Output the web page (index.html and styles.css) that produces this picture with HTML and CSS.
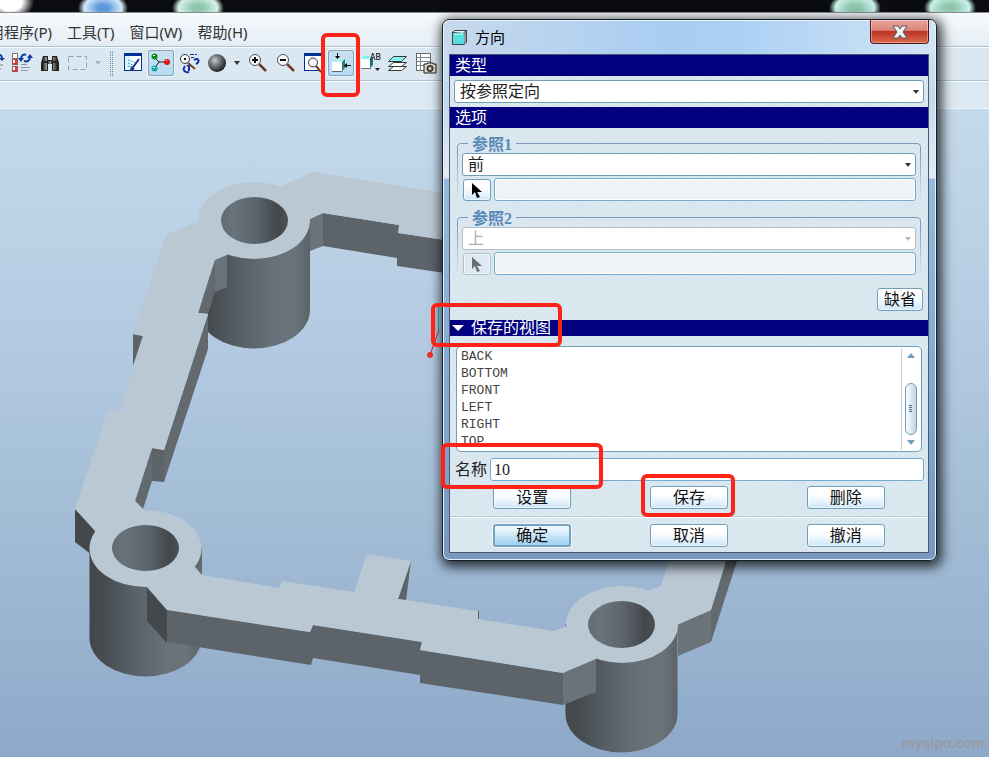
FILE: index.html
```html
<!DOCTYPE html>
<html lang="zh-CN">
<head>
<meta charset="utf-8">
<meta name="viewport" content="width=device-width, initial-scale=1">
<title>方向</title>
<link rel="stylesheet" href="styles.css">
</head>
<body>
<div class="app">
  <div class="window-top"></div>
  <nav class="menubar">
    <a href="#">用程序(P)</a>
    <a href="#">工具(T)</a>
    <a href="#">窗口(W)</a>
    <a href="#">帮助(H)</a>
  </nav>
  <div class="toolbar">
    <button class="tool" type="button" aria-label="更新">
      <svg viewBox="0 0 26 26"><path d="M17 6q5-3 5 3" fill="none" stroke="#0b3a9c" stroke-width="2"/><path d="M19 8h6l-3 3z" fill="#0b3a9c"/><path d="M18 15h5M18 19h3" stroke="#888"/></svg>
    </button>
    <button class="tool" type="button" aria-label="再生">
      <svg viewBox="0 0 26 26">
        <rect x="4.500" y="3.500" width="5" height="5" fill="#fff" stroke="#777"/><rect x="4.500" y="9.500" width="5" height="5" fill="#e33" stroke="#955"/><rect x="4.500" y="16.500" width="5" height="5" fill="#e33" stroke="#955"/>
        <path d="M5 10h2v3H5zM5 17h2v3H5z" fill="#fff"/>
        <path d="M13 9c0-4 3-5 5-4M22 7c0 4-3 5-6 4" fill="none" stroke="#0b3a9c" stroke-width="2"/><path d="M10 8h6l-3 4zM19 8h6l-3-4z" fill="#0b3a9c"/>
        <path d="M13 14.500h6M13 17.500h9M13 20.500h7" stroke="#8b959b"/>
      </svg>
    </button>
    <button class="tool" type="button" aria-label="查找">
      <svg viewBox="0 0 26 26">
        <defs><linearGradient id="bino"><stop offset="0" stop-color="#111"/><stop offset=".45" stop-color="#e8e5d8"/><stop offset="1" stop-color="#111"/></linearGradient></defs>
        <path d="M7 6h5v4h4V6h5l2 7v8h-7v-7h-4v7H5v-8z" fill="#222"/>
        <path d="M8 7h3v4H7zM17 7h3l1 4h-4zM6 13h5v7H6zM17 13h5v7h-5z" fill="url(#bino)"/><circle cx="14" cy="12.500" r="1.500" fill="#999"/>
      </svg>
    </button>
    <button class="tool" type="button" aria-label="框选">
      <svg viewBox="0 0 26 26"><rect x="4.500" y="6.500" width="18" height="13" fill="none" stroke="#98a0a5" stroke-dasharray="5 3"/></svg>
    </button>
    <button class="drop faded" type="button" aria-label="框选选项"></button>
    <span class="grip"></span>
    <button class="tool" type="button" aria-label="重画">
      <svg viewBox="0 0 26 26"><rect x="4.500" y="3.500" width="17" height="17" fill="#fff" stroke="#003296"/><path d="M4 3h18v3H4z" fill="#003296"/><path d="M5 6h6L9 20H5z" fill="#dff3fc"/><path d="M8 10l9 3M8 13l7 3M8 16l5 2" stroke="#20a8d8" stroke-dasharray="2 1"/><path d="M19 9l-8 11" stroke="#123a86" stroke-width="2"/><path d="M11 16l4 3-5 2z" fill="#123a86"/></svg>
    </button>
    <button class="tool active" type="button" aria-label="旋转中心">
      <svg viewBox="0 0 26 26"><path d="M6 7l5 5-5 7M11 12h8" fill="none" stroke="#222"/><circle cx="6.500" cy="6.500" r="3" fill="#0a8f18"/><circle cx="19" cy="12" r="3" fill="#d61616"/><circle cx="6.500" cy="18.500" r="3" fill="#14a8ac"/><path d="M5 5h2v1H5zM18 10h1v1h-1zM5 17h2v1H5z" fill="#fff"/></svg>
    </button>
    <button class="tool" type="button" aria-label="定向模式">
      <svg viewBox="0 0 26 26"><path d="M12 13l7 6" stroke="#6e3b24" stroke-width="2"/><circle cx="9" cy="9" r="4.500" fill="#f5f8fa" stroke="#333"/><path d="M8 8h2v2H8z" fill="#111"/><path d="M14 4.500h7M15 7.500h3" stroke="#1732a0" stroke-dasharray="4 1"/><path d="M18 10c5-3 6 2 2 4M9 16c-3 4 0 7 4 6M13 17v4" fill="none" stroke="#1732a0" stroke-width="2"/><path d="M10 15h4v4z" fill="#1732a0"/></svg>
    </button>
    <button class="tool" type="button" aria-label="着色">
      <svg viewBox="0 0 26 26"><defs><radialGradient id="ball" cx=".38" cy=".36" r=".65"><stop offset="0" stop-color="#c9cdd0"/><stop offset=".35" stop-color="#83898e"/><stop offset="1" stop-color="#1d2023"/></radialGradient></defs><circle cx="13" cy="13" r="9" fill="url(#ball)"/></svg>
    </button>
    <button class="drop shade-drop" type="button" aria-label="着色选项"></button>
    <button class="tool" type="button" aria-label="放大">
      <svg viewBox="0 0 26 26"><path d="M15 14l7 7" stroke="#6e3b24" stroke-width="2.500"/><circle cx="11" cy="10" r="5.500" fill="#f5f9fb" stroke="#4b5257"/><path d="M8 10h6M11 7v6" stroke="#111" stroke-width="2"/></svg>
    </button>
    <button class="tool" type="button" aria-label="缩小">
      <svg viewBox="0 0 26 26"><path d="M15 14l7 7" stroke="#6e3b24" stroke-width="2.500"/><circle cx="11" cy="10" r="5.500" fill="#f5f9fb" stroke="#4b5257"/><path d="M8 10h6" stroke="#111" stroke-width="2"/></svg>
    </button>
    <button class="tool" type="button" aria-label="重新调整">
      <svg viewBox="0 0 26 26"><rect x="4.500" y="3.500" width="17" height="17" fill="#fff" stroke="#003296"/><path d="M4 3h18v3H4z" fill="#003296"/><path d="M16 16l5 6" stroke="#6e3b24" stroke-width="2"/><circle cx="13" cy="12.500" r="4.500" fill="#f1f7fa" stroke="#333"/></svg>
    </button>
    <span class="marked">
      <button class="tool active" type="button" aria-label="重定向">
        <svg viewBox="0 0 26 26"><path d="M5 12l3-3h9l-3 3z" fill="#a9f1ef"/><path d="M14 12l3-3v9l-3 3z" fill="#138a86"/><path d="M4 12h10v9H4z" fill="#fff"/><path d="M4 21.500h10M14.500 12v9" stroke="#5b6468" fill="none"/><path d="M9.500 3v5M17 15.500h6" stroke="#000"/><path d="M7 6h5l-2.500 3zM19 13v5l-3-2.500z" fill="#000"/></svg>
      </button>
      <span class="mark mark-tool"></span>
    </span>
    <button class="tool" type="button" aria-label="已命名视图">
      <svg viewBox="0 0 26 26"><path d="M5 9l3-3h7l-3 3z" fill="#7ff0ee"/><path d="M14 9l3-2v8l-3 3z" fill="#147c7c"/><path d="M5 9h9v9H5z" fill="#fff"/><path d="M5 18.500h10" stroke="#6c777d"/><text x="14" y="10" class="icon-text">AB</text><path d="M19 18h5l-2.500 3z" fill="#222"/></svg>
    </button>
    <button class="tool" type="button" aria-label="层">
      <svg viewBox="0 0 26 26"><g stroke="#30383c" stroke-linejoin="round"><path d="M4.500 20.500l5-4h13l-5 4z" fill="#fff"/><path d="M4.500 16.500l5-4h13l-5 4z" fill="#fff"/><path d="M4.500 11.500l5-5h13l-5 5z" fill="#87f1ef"/></g></svg>
    </button>
    <button class="tool" type="button" aria-label="视图管理器">
      <svg viewBox="0 0 26 26"><rect x="4.500" y="3.500" width="14" height="17" fill="#fff" stroke="#646c70"/><path d="M5 7.500h13M5 11.500h13M5 15.500h13M8.500 4v16" stroke="#7c858a"/><path d="M12 14h3v-1h6v1h3v9H12z" fill="#ded9c0" stroke="#222"/><circle cx="18" cy="18.500" r="3" fill="#777" stroke="#111"/><circle cx="18" cy="18.500" r="1" fill="#fff"/></svg>
    </button>
  </div>
  <div class="message-bar"></div>
  <main class="canvas">
    <svg class="model" viewBox="0 109 989 648" width="989" height="648" aria-label="模型">
      <defs>
        <linearGradient id="body"><stop offset="0" stop-color="#42474a"/><stop offset=".12" stop-color="#454b4f"/><stop offset=".35" stop-color="#565e65"/><stop offset=".7" stop-color="#69727a"/><stop offset=".86" stop-color="#6b747b"/><stop offset="1" stop-color="#5b6368"/></linearGradient>
        <linearGradient id="hole"><stop offset="0" stop-color="#636c73"/><stop offset=".2" stop-color="#69737b"/><stop offset=".55" stop-color="#5b636a"/><stop offset=".85" stop-color="#42474a"/><stop offset="1" stop-color="#4b5053"/></linearGradient>
      </defs>
      <path d="M198 220V310A56 38.500 0 0 0 310 310V220z" fill="url(#body)"/>
      <path d="M89.500 548V638A56 38.500 0 0 0 201.500 638V548z" fill="url(#body)"/>
      <path d="M565.500 624V714A56 38.500 0 0 0 677.500 714V624z" fill="url(#body)"/>
      <path d="M180 300H208V349L180 420z" fill="#b6cde3"/>
      <g fill="#5c6469">
        <path d="M323 213L399 225V233L445 240V273L397 266V258L323 246z"/>
        <path d="M133 334L143 336L133 366z"/>
        <path d="M152 448L164 450V482L152 481z"/>
        <path d="M167 610L310 632L313 625L422 642L420 650L563 673V705L420 683V675L313 658L311 665L167 642z"/>
        <path d="M411 561L406 600L398 599zM477 611h2v9l-2-1z"/>
      </g>
      <g fill="#626a70">
        <path d="M208 314V349L164 482V450z"/>
        <path d="M215 260L198 313L208 314L215 292z"/>
        <path d="M152 448V481L143 509L135 501z"/>
        <path d="M195 566L202 548V575z"/>
        <path d="M711 610L726 560L737 561L711 642z"/>
      </g>
      <g fill="#6b737a">
        <path d="M310 218L323 213V246L310 251zM215 260L227 255V287L215 292zM563 673L596 659V692L563 705zM678 624L711 610V642L678 656z"/>
      </g>
      <path d="M75 509L96 530V558L75 542zM147 588L167 610V643L147 621z" fill="#42484b"/>
      <g fill="#bac8d3">
        <ellipse cx="254" cy="220.500" rx="56" ry="38.500"/>
        <ellipse cx="145.500" cy="548.500" rx="56" ry="38.500"/>
        <ellipse cx="622" cy="624.500" rx="56" ry="38.500"/>
        <path d="M281 186L313 172L445 193V240L398 233L399 225L323 213L308 220L270 240z"/>
        <path d="M200 220L166 235L133 334L143 336L119 411L108 410L75 509L95 531L100 550L150 530V515L143 509L135 501L152 448L164 450L208 314L198 313L215 260L227 255L250 240z"/>
        <path d="M185 560L195 567L202 575L279 588L282 581L354 592L367 554L411 561L398 599L478 611V619L554 631L572 624L600 645L596 659L563 673L420 650L422 642L313 625L310 632L167 610L147 587z"/>
        <path d="M645 592L661 586L674 545H731L711 610L677 625L640 640z"/>
      </g>
      <ellipse cx="254.500" cy="220.500" rx="33.500" ry="23.500" fill="url(#hole)"/>
      <ellipse cx="145.500" cy="548" rx="33.500" ry="23" fill="url(#hole)"/>
      <ellipse cx="621.500" cy="624.500" rx="33.500" ry="23.500" fill="url(#hole)"/>
      <path d="M438.500 303V330" stroke="#16bcc0"/>
      <path d="M439 330L430 355" stroke="#d22"/><circle cx="430" cy="355" r="3" fill="#f2302c"/>
    </svg>
    <span class="watermark">mysipo.com</span>
  </main>

  <section class="dialog" role="dialog" aria-labelledby="dialog-title">
    <header class="titlebar">
      <svg class="title-icon" viewBox="0 0 17 17"><path d="M1 3l3-2h12v12l-3 3H1z" fill="#39444a"/><path d="M2 3l2-1h10l-2 2z" fill="#eef3f3"/><path d="M13 4l2-2v11l-2 2z" fill="#8c9ba0"/><path d="M2 4h11v11H2z" fill="#58dedd"/><path d="M3 5h9v1H3z" fill="#a7f2f0"/></svg>
      <h1 id="dialog-title">方向</h1>
      <button class="close" type="button" aria-label="关闭"><svg viewBox="0 0 16 14"><path d="M1 1h5l2 3 2-3h5l-4 6 4 6h-5l-2-3-2 3H1l4-6z" fill="#f3f3f3" stroke="#565b68"/></svg></button>
    </header>
    <form class="content">
      <h2 class="band">类型</h2>
      <div class="pick type-pick"><select aria-label="类型"><option>按参照定向</option></select></div>
      <h2 class="band">选项</h2>
      <fieldset class="ref">
        <legend>参照1</legend>
        <div class="pick"><select aria-label="参照1"><option>前</option></select></div>
        <div class="ref-row">
          <button class="btn" type="button" aria-label="选取参照1"><svg viewBox="0 0 12 16"><path d="M1 0v12l3-3 2 6 3-1-3-5h5z" fill="#000"/></svg></button>
          <input type="text" readonly aria-label="参照1 值">
        </div>
      </fieldset>
      <fieldset class="ref">
        <legend>参照2</legend>
        <div class="pick"><select aria-label="参照2" disabled><option>上</option></select></div>
        <div class="ref-row">
          <button class="btn" type="button" disabled aria-label="选取参照2"><svg viewBox="0 0 12 16"><path d="M1 0v12l3-3 2 6 3-1-3-5h5z" fill="#666e72"/></svg></button>
          <input type="text" readonly aria-label="参照2 值">
        </div>
      </fieldset>
      <div class="default-row"><button class="btn" type="button">缺省</button></div>
      <h2 class="band saved"><span class="triangle"></span>保存的视图<span class="mark mark-saved"></span></h2>
      <div class="list">
        <select size="6" aria-label="保存的视图">
          <option>BACK</option><option>BOTTOM</option><option>FRONT</option><option>LEFT</option><option>RIGHT</option><option>TOP</option>
        </select>
        <div class="scroll"><span class="up"></span><span class="thumb"></span><span class="down"></span></div>
      </div>
      <div class="name-row">
        <label for="view-name">名称</label>
        <input id="view-name" type="text" value="10">
        <span class="mark mark-name"></span>
      </div>
      <div class="actions">
        <button class="btn" type="button">设置</button>
        <span class="marked"><button class="btn" type="button">保存</button><span class="mark mark-save"></span></span>
        <button class="btn" type="button">删除</button>
      </div>
      <div class="actions closing">
        <button class="btn primary" type="button">确定</button>
        <button class="btn" type="button">取消</button>
        <button class="btn" type="button">撤消</button>
      </div>
    </form>
  </section>
</div>
</body>
</html>
```
FILE: styles.css
```css
* { box-sizing: border-box; }

body {
  margin: 0;
  overflow: hidden;
  font-family: "Liberation Serif", "Noto Sans CJK SC", serif;
  font-size: 16px;
  color: #222;
}

button, input, select { font: inherit; color: inherit; margin: 0; padding: 0; }

.app {
  position: relative;
  display: flex;
  flex-direction: column;
  min-height: 100vh;
}

/* Main window */
.window-top {
  height: 13px;
  border-bottom: 1px solid #8e8b90;
  background:
    radial-gradient(ellipse 24px 18px at 10px 2px, #fff 50%, transparent),
    radial-gradient(ellipse 25px 16px at 103px 8px, #5b98dc 20%, #d5e9fa 75%, transparent),
    radial-gradient(ellipse 26px 16px at 198px 8px, #8fc6ad 20%, #d6f2ea 75%, transparent),
    radial-gradient(ellipse 26px 16px at 855px 8px, #8fc6ad 20%, #c9f2ea 75%, transparent),
    radial-gradient(ellipse 26px 16px at 950px 8px, #8fc6ad 20%, #c9f2ea 75%, transparent),
    #0b0c0f;
}

.menubar {
  display: flex;
  align-items: center;
  gap: 15px;
  height: 34px;
  padding-top: 4px;
  border-bottom: 1px solid #aac4d5;
  background: linear-gradient(#f5fafd, #e5edf4);
  font-family: "Noto Sans", "Noto Sans CJK SC", sans-serif;
  font-size: 15px;
  line-height: 20px;
}
.menubar a { color: #333; text-decoration: none; white-space: nowrap; }
.menubar a:first-child { margin-left: -11px; }

.toolbar {
  display: flex;
  align-items: center;
  gap: 2px;
  height: 34px;
  padding-bottom: 2px;
  border-top: 1px solid #f8fbfd;
  border-bottom: 1px solid #aac4d5;
  background: #dce8f1;
}
.toolbar > :first-child { margin-left: -20px; }
.tool {
  flex: none;
  width: 26px;
  height: 26px;
  border: 0;
  border-radius: 3px;
  background: none;
}
.tool svg { display: block; width: 26px; height: 26px; }
.tool.active {
  background: linear-gradient(#cbe1f1, #b6daf4);
  box-shadow: inset 0 0 0 1px #82a4b9, 0 0 0 1px #eef6fb;
}
.drop {
  display: flex;
  justify-content: center;
  align-items: center;
  width: 12px;
  height: 26px;
  border: 0;
  background: none;
}
.drop::before {
  content: "";
  border: 3px solid transparent;
  border-top: 4px solid #333;
  border-bottom: 0;
}
.shade-drop { width: 10px; }
.faded { opacity: .3; }
.grip {
  width: 4px;
  height: 26px;
  margin: 0 4px;
  background:
    linear-gradient(#dce8f1 1px, transparent 1px) 0 0 / 2px 2px,
    linear-gradient(90deg, #6f8492 1px, transparent 1px) 0 0 / 2px 2px;
}
.icon-text { font: 9px "DejaVu Sans Mono", monospace; }

.message-bar {
  height: 28px;
  border-top: 1px solid #f6fafc;
  border-bottom: 1px solid #f4f8fa;
  background: #dde9f2;
}

.canvas {
  position: relative;
  flex: 1;
  background: linear-gradient(#c4daea, #b3cae2 35%, #a2bcd6 65%, #8ea8c9);
}
.model { display: block; }
.watermark {
  position: absolute;
  right: 5px;
  bottom: 4px;
  font: bold 14px/20px "Liberation Sans Narrow", "Liberation Sans", sans-serif;
  color: #979aa0;
}

/* Red call-out frames */
.marked { position: relative; display: flex; }
.mark {
  position: absolute;
  z-index: 2;
  border: 4px solid #ff2317;
  border-radius: 6px;
  pointer-events: none;
}
.mark-tool { inset: -17px -6px -21px -7px; z-index: 0; }
.mark-saved { top: -17px; left: -19px; width: 131px; height: 44px; }
.mark-name { top: -15px; left: -14px; width: 162px; height: 46px; }
.mark-save { inset: -12px -7px -8px -9px; }

/* Dialog */
.dialog {
  position: absolute;
  top: 19px;
  left: 442px;
  width: 495px;
  padding: 0 7px 7px 6px;
  border: 1px solid #16202b;
  border-radius: 7px;
  background:
    linear-gradient(90deg, #c7d9ec, #a9cdf2 45%, #acd0f4 60%, #d2e4f6) top / 100% 34px no-repeat,
    linear-gradient(#d3e3f3, #c3d9ef 80px, #e2ebf5 158px, #94bae0 159px, #7799c0);
  box-shadow: inset 0 0 0 1px #e6f1fb, 2px 3px 12px 3px rgba(0, 0, 0, .75);
}
.titlebar {
  display: flex;
  align-items: center;
  height: 34px;
  padding-left: 2px;
}
.title-icon { width: 17px; height: 17px; }
.titlebar h1 {
  flex: 1;
  margin: 0 0 0 7px;
  font: 15px/20px "Noto Sans CJK SC", sans-serif;
  color: #000;
}
.close {
  align-self: flex-start;
  display: flex;
  justify-content: center;
  align-items: center;
  width: 59px;
  height: 24px;
  border: 1px solid #51191a;
  border-top: 0;
  border-radius: 0 0 4px 4px;
  background: linear-gradient(#eba49b, #dd8378 45%, #b93424 50%, #dc6a49);
  box-shadow: inset 0 0 0 1px rgba(255, 255, 255, .35);
}
.close svg { width: 16px; height: 14px; }

.content {
  border: 1px solid #4b596b;
  padding-bottom: 5px;
  background: repeating-linear-gradient(135deg, #d6e5ee 0 2px, #dde9f1 2px 4px);
}

.band {
  margin: 0;
  padding-left: 5px;
  height: 21px;
  background: #000080;
  color: #fff;
  font-size: 16px;
  font-weight: normal;
  line-height: 21px;
}

.pick { position: relative; }
.pick::after {
  content: "";
  position: absolute;
  top: 10px;
  right: 5px;
  border: 3px solid transparent;
  border-top: 4px solid #333;
  border-bottom: 0;
}
.pick:has(:disabled)::after { opacity: .35; }
.pick select {
  display: block;
  appearance: none;
  width: 100%;
  height: 23px;
  padding: 0 20px 0 5px;
  border: 1px solid #729fb8;
  border-radius: 3px;
  background: #fff;
  line-height: 20px;
  opacity: 1;
}
.pick select:disabled { color: #a9adb0; border-color: #b6bfc5; }
.type-pick { margin: 4px; }

.ref {
  position: relative;
  min-width: 0;
  margin: 8px 7px 9px;
  padding: 0 5px;
  border: 0;
}
.ref + .ref { margin-top: 0; }
.ref::before {
  content: "";
  position: absolute;
  inset: -10px 0 0;
  border: 1px solid #7d9cbd;
  border-bottom: 0;
  border-radius: 4px 4px 0 0;
  mask-image: linear-gradient(#000 10px, transparent);
  pointer-events: none;
}
.ref legend {
  position: relative;
  z-index: 1;
  height: 17px;
  margin-left: 6px;
  padding: 0 4px;
  background: #dae7f0;
  color: #5b89b7;
  font-weight: bold;
  line-height: 17px;
}
.ref-row { display: flex; gap: 3px; margin-top: 2px; padding-left: 1px; }
.ref-row input { flex: 1; min-width: 0; height: 23px; background: #eff3f5; }
.ref-row .btn { width: 28px; height: 22px; margin-top: 1px; }
.ref-row svg { display: block; width: 12px; height: 16px; margin: 1px auto 0; }

.content input {
  padding: 0 3px;
  border: 1px solid #72acd0;
  border-radius: 3px;
  box-shadow: inset 0 0 0 1px #fff;
}

.btn {
  height: 23px;
  border: 1px solid #729fb8;
  border-radius: 3px;
  background: linear-gradient(#fff 30%, #eef7fd 60%, #cbe6f8);
  box-shadow: inset 0 0 0 1px rgba(255, 255, 255, .6);
  color: #111;
  line-height: 20px;
}
.btn:disabled { border-color: #b6bfc5; background: #dde9f0; }
.btn.primary {
  border: 2px solid #77a4bd;
  background: linear-gradient(#e9f5fc 20%, #cbe6f8 50%, #9fd0f4);
  box-shadow: 0 0 0 1px #edf6fb;
  line-height: 18px;
}

.default-row { display: flex; justify-content: flex-end; margin: 13px 5px 9px; }
.default-row .btn { width: 46px; }

.saved {
  position: relative;
  display: flex;
  align-items: center;
  gap: 7px;
  height: 16px;
  padding-left: 2px;
  line-height: 16px;
}
.triangle { border: 6px solid transparent; border-top-color: #fff; border-bottom: 0; }

.list {
  display: flex;
  height: 106px;
  margin: 10px 6px 6px;
  border: 1px solid #729fb8;
  border-radius: 5px;
  background: #fff;
  overflow: hidden;
}
.list select {
  flex: 1;
  height: 104px;
  padding: 2px 0 0;
  border: 0;
  outline: 0;
  background: none;
  overflow: hidden;
  scrollbar-width: none;
  font: 13px/17px "Liberation Mono", monospace;
  color: #444;
}
.list option { height: 17px; min-height: 17px; padding: 0 4px; line-height: 17px; }
.scroll {
  display: flex;
  flex-direction: column;
  align-items: center;
  width: 20px;
  margin: 1px 0;
  padding: 5px 2px 5px 0;
  border-left: 1px solid #c3d4dd;
}
.up { border: 4px solid transparent; border-bottom: 5px solid #729fb8; border-top: 0; }
.down { border: 4px solid transparent; border-top: 5px solid #729fb8; border-bottom: 0; }
.thumb {
  width: 12px;
  height: 52px;
  margin: auto 0 5px;
  border: 1px solid #729fb8;
  border-radius: 6px;
  background:
    repeating-linear-gradient(#3f7396 0 1px, transparent 1px 2px) center / 3px 8px no-repeat,
    linear-gradient(90deg, #fff, #bcd4e2);
}

.name-row {
  position: relative;
  display: flex;
  align-items: center;
  gap: 3px;
  margin: 0 4px 5px 5px;
}
.name-row label { line-height: 23px; }
.name-row input { flex: 1; min-width: 0; height: 23px; }

.actions {
  display: grid;
  grid-template-columns: repeat(3, 1fr);
  justify-items: center;
  padding: 0 4px 7px;
}
.actions .btn { width: 78px; }
.closing {
  padding: 7px 4px 0;
  border-top: 1px solid #b9cbd6;
  box-shadow: inset 0 1px #f7fafc;
}
```
